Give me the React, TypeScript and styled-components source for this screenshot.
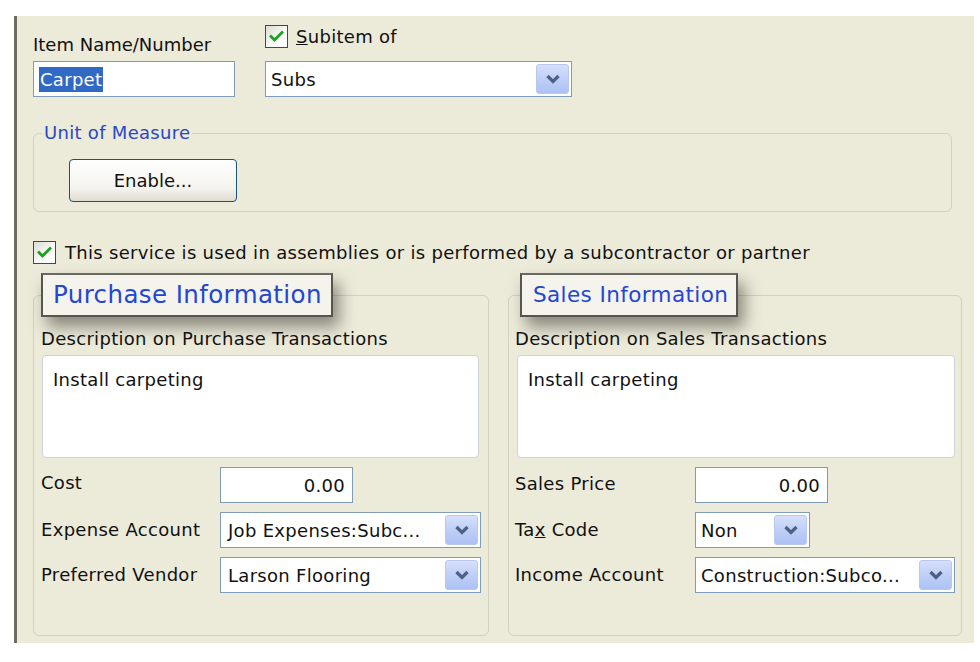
import React from 'react';
import styled, { createGlobalStyle } from 'styled-components';

const GlobalStyle = createGlobalStyle`
  body {
    margin: 0;
    background: #fff;
    font-family: "DejaVu Sans", "Liberation Sans", sans-serif;
    font-size: 18px;
    letter-spacing: 0.3px;
    color: #111;
  }
`;

const Page = styled.div`
  padding: 16px 6px 19px 14px;
`;

const Panel = styled.div`
  box-sizing: border-box;
  height: 627px;
  background: #ecead9;
  border-left: 3px solid #6f6c62;
  padding: 8px 12px 0 16px;
  display: flex;
  flex-direction: column;
`;

const TopRow = styled.div`
  display: grid;
  grid-template-columns: 202px 307px;
  column-gap: 30px;
`;

const FieldLabel = styled.div`
  height: 37px;
  display: flex;
  align-items: flex-end;
  padding-bottom: 5px;
  box-sizing: border-box;
  line-height: 22px;
  letter-spacing: 0;
`;

const CheckRow = styled.label<{ $gap: number; $top?: number }>`
  display: flex;
  align-items: flex-start;
  gap: ${(p) => p.$gap}px;
  padding-top: ${(p) => p.$top ?? 0}px;
  height: ${(p) => (p.$top ? 37 : 24)}px;
  box-sizing: border-box;
  line-height: 24px;
`;

const CheckBox = styled.span`
  box-sizing: border-box;
  width: 23px;
  height: 23px;
  flex: none;
  border: 1px solid #1c5180;
  background: linear-gradient(135deg, #dcdcd5, #fff 70%);
  display: flex;
  align-items: center;
  justify-content: center;
`;

const TextBox = styled.div<{ $width?: number; $right?: boolean }>`
  box-sizing: border-box;
  height: 36px;
  width: ${(p) => (p.$width ? `${p.$width}px` : '100%')};
  background: #fff;
  border: 1px solid #7f9db9;
  display: flex;
  align-items: center;
  justify-content: ${(p) => (p.$right ? 'flex-end' : 'flex-start')};
  padding: ${(p) => (p.$right ? '0 7px 0 0' : '0 0 0 5px')};
  white-space: nowrap;
`;

const Selected = styled.span`
  background: #316ac5;
  color: #fff;
  line-height: 25px;
  padding: 0 1px;
`;

const Combo = styled.div<{ $width?: number }>`
  box-sizing: border-box;
  height: 36px;
  width: ${(p) => (p.$width ? `${p.$width}px` : '100%')};
  background: #fff;
  border: 1px solid #7f9db9;
  display: flex;
  align-items: stretch;
  padding: 2px 2px 2px 5px;
  white-space: nowrap;
`;

const ComboText = styled.span<{ $inset?: number }>`
  flex: 1;
  display: flex;
  align-items: center;
  padding-left: ${(p) => p.$inset ?? 0}px;
  overflow: hidden;
`;

const DropButton = styled.span`
  box-sizing: border-box;
  width: 33px;
  flex: none;
  border: 1px solid #b8c8ef;
  border-radius: 3px;
  background: linear-gradient(180deg, #d6e0fb 0%, #bccdf7 55%, #adc2f4 100%);
  display: flex;
  align-items: center;
  justify-content: center;
`;

const GroupBox = styled.fieldset<{ $right?: number }>`
  margin: 0 ${(p) => p.$right ?? 0}px 0 0;
  padding: 0;
  min-width: 0;
  border: 1px solid #d3d0bf;
  border-radius: 6px;
`;

const PlainLegend = styled.legend`
  margin-left: 8px;
  padding: 0 2px;
  line-height: 22px;
  color: #2a46c8;
`;

const BoxLegend = styled.legend<{ $size: number; $left: number; $pad: string }>`
  box-sizing: border-box;
  height: 44px;
  margin-left: ${(p) => p.$left}px;
  padding: ${(p) => p.$pad};
  font-size: ${(p) => p.$size}px;
  letter-spacing: 0.4px;
  line-height: 40px;
  color: #2446d4;
  background: #f4f3ec;
  border: 2px solid #56554f;
  border-top-color: #6a6962;
  box-shadow: 6px 10px 16px rgba(40, 38, 30, 0.5);
`;

const UnitBody = styled.div`
  padding: 15px 0 9px 35px;
`;

const XpButton = styled.button`
  box-sizing: border-box;
  width: 168px;
  height: 43px;
  border: 1px solid #1f4f7d;
  border-radius: 4px;
  background: linear-gradient(180deg, #fefefd 0%, #f4f3ee 70%, #dedbd0 100%);
  font: inherit;
  color: #111;
  padding: 0;
`;

const UnitSection = styled.div`
  margin-top: 25px;
`;

const ServiceRow = styled.div`
  margin-top: 29px;
`;

const Groups = styled.div`
  margin-top: 8px;
  height: 363px;
  display: grid;
  grid-template-columns: 456px 454px;
  column-gap: 19px;
`;

const GroupBody = styled.div<{ $left: number; $right: number }>`
  padding: 11px ${(p) => p.$right}px 0 ${(p) => p.$left}px;
`;

const Caption = styled.div`
  line-height: 22px;
  white-space: nowrap;
`;

const Memo = styled.div<{ $shift?: number }>`
  box-sizing: border-box;
  height: 103px;
  margin: 5px 0 0 ${(p) => p.$shift ?? 1}px;
  background: #fff;
  border: 1px solid #cdd3da;
  border-radius: 4px;
  padding: 13px 10px;
  line-height: 22px;
`;

const Fields = styled.div<{ $label: number }>`
  margin-top: 9px;
  display: grid;
  grid-template-columns: ${(p) => p.$label}px 1fr;
  grid-auto-rows: 36px;
  row-gap: 9px;
  align-items: center;
`;

const RowLabel = styled.div<{ $up?: number }>`
  line-height: 22px;
  margin-top: ${(p) => -(p.$up ?? 0)}px;
  white-space: nowrap;
`;

const Check = () => (
  <CheckBox>
    <svg width="15" height="13" viewBox="0 0 15 13">
      <path d="M2 6.5 L5.5 10 L13 2.5" fill="none" stroke="#21a121" strokeWidth="3" strokeLinecap="square" />
    </svg>
  </CheckBox>
);

const Chevron = () => (
  <svg width="16" height="12" viewBox="0 0 16 12">
    <path d="M2.5 3 L8 8.5 L13.5 3" fill="none" stroke="#4d6185" strokeWidth="3.2" />
  </svg>
);

type ComboProps = { value: string; width?: number; inset?: number };

const ComboField = ({ value, width, inset }: ComboProps) => (
  <Combo $width={width}>
    <ComboText $inset={inset}>{value}</ComboText>
    <DropButton>
      <Chevron />
    </DropButton>
  </Combo>
);

export default function App() {
  return (
    <>
      <GlobalStyle />
      <Page>
        <Panel>
          <TopRow>
            <div>
              <FieldLabel>Item Name/Number</FieldLabel>
              <TextBox>
                <Selected>Carpet</Selected>
              </TextBox>
            </div>
            <div>
              <CheckRow $gap={8} $top={1}>
                <Check />
                <span>
                  <u>S</u>ubitem of
                </span>
              </CheckRow>
              <ComboField value="Subs" />
            </div>
          </TopRow>

          <UnitSection>
            <GroupBox $right={10}>
              <PlainLegend>Unit of Measure</PlainLegend>
              <UnitBody>
                <XpButton>Enable...</XpButton>
              </UnitBody>
            </GroupBox>
          </UnitSection>

          <ServiceRow>
            <CheckRow $gap={9}>
              <Check />
              <span>This service is used in assemblies or is performed by a subcontractor or partner</span>
            </CheckRow>
          </ServiceRow>

          <Groups>
            <GroupBox>
              <BoxLegend $size={24.5} $left={7} $pad="0 9px 0 10px">
                Purchase Information
              </BoxLegend>
              <GroupBody $left={7} $right={9}>
                <Caption>Description on Purchase Transactions</Caption>
                <Memo>Install carpeting</Memo>
                <Fields $label={179}>
                  <RowLabel $up={4}>Cost</RowLabel>
                  <TextBox $width={133} $right>
                    0.00
                  </TextBox>
                  <RowLabel>Expense Account</RowLabel>
                  <ComboField value="Job Expenses:Subc..." width={261} inset={2} />
                  <RowLabel>Preferred Vendor</RowLabel>
                  <ComboField value="Larson Flooring" width={261} inset={2} />
                </Fields>
              </GroupBody>
            </GroupBox>

            <GroupBox>
              <BoxLegend $size={21.5} $left={11} $pad="0 8px 0 11px">
                Sales Information
              </BoxLegend>
              <GroupBody $left={6} $right={6}>
                <Caption>Description on Sales Transactions</Caption>
                <Memo $shift={2}>Install carpeting</Memo>
                <Fields $label={180}>
                  <RowLabel $up={2}>Sales Price</RowLabel>
                  <TextBox $width={133} $right>
                    0.00
                  </TextBox>
                  <RowLabel>
                    Ta<u>x</u> Code
                  </RowLabel>
                  <ComboField value="Non" width={115} inset={0} />
                  <RowLabel>Income Account</RowLabel>
                  <ComboField value="Construction:Subco..." width={260} inset={0} />
                </Fields>
              </GroupBody>
            </GroupBox>
          </Groups>
        </Panel>
      </Page>
    </>
  );
}
